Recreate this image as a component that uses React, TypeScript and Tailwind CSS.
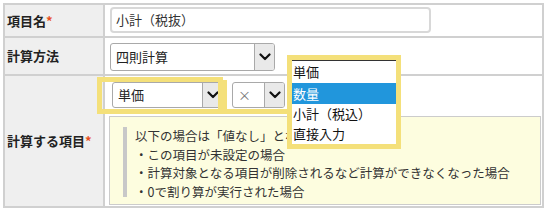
import React from "react";

const FONT = '"Noto Sans CJK JP", "Noto Sans", sans-serif';

function Chevron() {
  return (
    <svg width="12" height="8" viewBox="0 0 12 8">
      <path d="M1.5 1.5 L6 6 L10.5 1.5" stroke="#111" strokeWidth="2.2" fill="none" strokeLinecap="round" strokeLinejoin="round" />
    </svg>
  );
}

function Select({ text, className, textClass }: { text: string; className: string; textClass?: string }) {
  return (
    <div className={`flex border border-[#a9a9a9] rounded-[3px] bg-white overflow-hidden ${className}`}>
      <div className={`flex-1 flex items-center pl-[5px] text-[13px] ${textClass ?? "text-[#222]"}`}>{text}</div>
      <div className="w-[20px] h-full flex items-center justify-center bg-[#e9e9e9] border-l border-[#a9a9a9]">
        <Chevron />
      </div>
    </div>
  );
}

export default function App() {
  return (
    <div className="relative w-[548px] h-[212px] bg-white overflow-hidden pt-[3px] pl-[3px]" style={{ fontFamily: FONT }}>
      <div className="w-[541px] border-2 border-[#d0d0d0]">
        {/* Row 1 */}
        <div className="flex h-[33px] border-b-2 border-[#d0d0d0]">
          <div className="w-[100px] border-r-2 border-[#d0d0d0] bg-[#efefef] flex items-center pl-[2px] text-[13px] font-bold text-[#222]">
            項目名<span className="text-[#e8501e]">*</span>
          </div>
          <div className="flex-1 pl-[5px] pt-[2px]">
            <div className="w-[321px] h-[26px] border-2 border-[#d8d8d8] rounded-[4px] flex items-center pl-[4px] text-[13px] text-[#333]">
              小計（税抜）
            </div>
          </div>
        </div>
        {/* Row 2 */}
        <div className="flex h-[38px] border-b-2 border-[#d0d0d0]">
          <div className="w-[100px] border-r-2 border-[#d0d0d0] bg-[#efefef] flex items-center pl-[2px] text-[13px] font-bold text-[#222]">
            計算方法
          </div>
          <div className="flex-1 pl-[5px] pt-[5px]">
            <Select text="四則計算" className="w-[165px] h-[28px]" />
          </div>
        </div>
        {/* Row 3 */}
        <div className="flex h-[130px]">
          <div className="w-[100px] border-r-2 border-[#d0d0d0] bg-[#efefef] flex items-center pl-[2px] text-[13px] font-bold text-[#222]">
            計算する項目<span className="text-[#e8501e]">*</span>
          </div>
          <div className="flex-1 flex flex-col pl-[4px] pt-[6px] pr-[1px] pb-[1px]">
            <div className="flex gap-[9px] ml-[3px]">
              <Select text="単価" className="w-[111px] h-[26px]" />
              <Select text="×" className="w-[53px] h-[26px]" textClass="text-[#777]" />
            </div>
            <div className="mt-[8px] h-[89px] w-[432px] border border-[#cccccc] bg-[#fdfddf] flex pl-[13px] pt-[10px]">
              <div className="w-[4px] h-[70px] bg-[#c8c8c8]" />
              <div className="ml-[8px] text-[12.5px] leading-[18.5px] text-[#333] whitespace-nowrap">
                <div>以下の場合は「値なし」となります。</div>
                <div>・この項目が未設定の場合</div>
                <div>・計算対象となる項目が削除されるなど計算ができなくなった場合</div>
                <div>・0で割り算が実行された場合</div>
              </div>
            </div>
          </div>
        </div>
      </div>

      {/* annotation highlights */}
      <div className="absolute left-[97px] top-[77px] w-[126px] h-[37px] border-[5px] border-[#f4e07a]" />
      <div className="absolute left-[222px] top-[80px] w-[69px] h-[34px] border-l-[5px] border-b-[5px] border-[#f4e07a]" />

      {/* dropdown list */}
      <div className="absolute left-[287px] top-[55px] w-[114px] h-[94px] border-[5px] border-[#f4e07a] bg-white">
        <div className="border-t border-[#333] text-[13px] text-[#111]">
          <div className="h-[22px] flex items-center pl-[1px]">単価</div>
          <div className="h-[21px] flex items-center pl-[1px] bg-[#2196dc] text-white">数量</div>
          <div className="h-[20px] flex items-center pl-[1px]">小計（税込）</div>
          <div className="h-[20px] flex items-center pl-[1px]">直接入力</div>
        </div>
      </div>
    </div>
  );
}
